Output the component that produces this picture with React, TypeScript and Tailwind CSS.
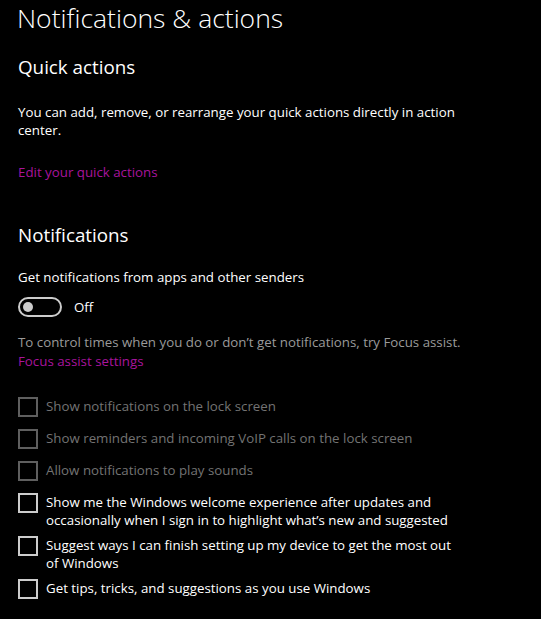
import React from "react";

const FONT = "font-['Open_Sans','Noto_Sans',sans-serif]";

function Checkbox({ disabled, lines, className = "" }: { disabled?: boolean; lines: string[]; className?: string }) {
  return (
    <div className={`flex items-start min-h-[32px] ${lines.length > 1 ? "pb-[7px]" : ""} ${className}`}>
      <div
        className={`w-[20px] h-[20px] shrink-0 border-2 ${disabled ? "border-[#5f5f5f]" : "border-[#cccccc]"}`}
      />
      <div
        className={`ml-[8px] text-[13.3px] leading-[18px] whitespace-nowrap ${disabled ? "text-[#737373]" : "text-white"}`}
      >
        {lines.map((l, i) => (
          <div key={i}>{l}</div>
        ))}
      </div>
    </div>
  );
}

export default function App() {
  return (
    <div className={`bg-black text-white min-h-[619px] w-full overflow-hidden px-[18px] ${FONT}`}>
      <h1 className="mt-[1px] text-[26.5px] font-light leading-[34px] -ml-[1px] whitespace-nowrap">
        Notifications &amp; actions
      </h1>

      <h2 className="mt-[19px] text-[18.8px] leading-[26px] font-normal">Quick actions</h2>

      <p className="mt-[23px] text-[13.3px] leading-[18px] whitespace-nowrap">
        You can add, remove, or rearrange your quick actions directly in action
        <br />
        center.
      </p>

      <div className="mt-[24px] text-[13.3px] leading-[18px] text-[#a8149c]">Edit your quick actions</div>

      <h2 className="mt-[41px] text-[18.8px] leading-[26px] font-normal">Notifications</h2>

      <div className="mt-[20px] text-[13.3px] leading-[18px]">Get notifications from apps and other senders</div>

      <div className="mt-[11px] flex items-center h-[20px]">
        <div className="w-[44px] h-[20px] rounded-full border-2 border-[#cccccc] flex items-center pl-[3px]">
          <div className="w-[10px] h-[10px] rounded-full bg-[#cccccc]" />
        </div>
        <span className="ml-[12px] text-[13.3px] leading-[18px]">Off</span>
      </div>

      <div className="mt-[16px] text-[13.3px] leading-[18px] text-[#9a9a9a] whitespace-nowrap">
        To control times when you do or don’t get notifications, try Focus assist.
      </div>
      <div className="mt-[1px] text-[13.3px] leading-[18px] text-[#a8149c]">Focus assist settings</div>

      <div className="mt-[27px] flex flex-col">
        <Checkbox disabled lines={["Show notifications on the lock screen"]} />
        <Checkbox disabled lines={["Show reminders and incoming VoIP calls on the lock screen"]} />
        <Checkbox disabled lines={["Allow notifications to play sounds"]} />
        <Checkbox
          lines={[
            "Show me the Windows welcome experience after updates and",
            "occasionally when I sign in to highlight what’s new and suggested",
          ]}
        />
        <Checkbox lines={["Suggest ways I can finish setting up my device to get the most out", "of Windows"]} />
        <Checkbox lines={["Get tips, tricks, and suggestions as you use Windows"]} />
      </div>
    </div>
  );
}
